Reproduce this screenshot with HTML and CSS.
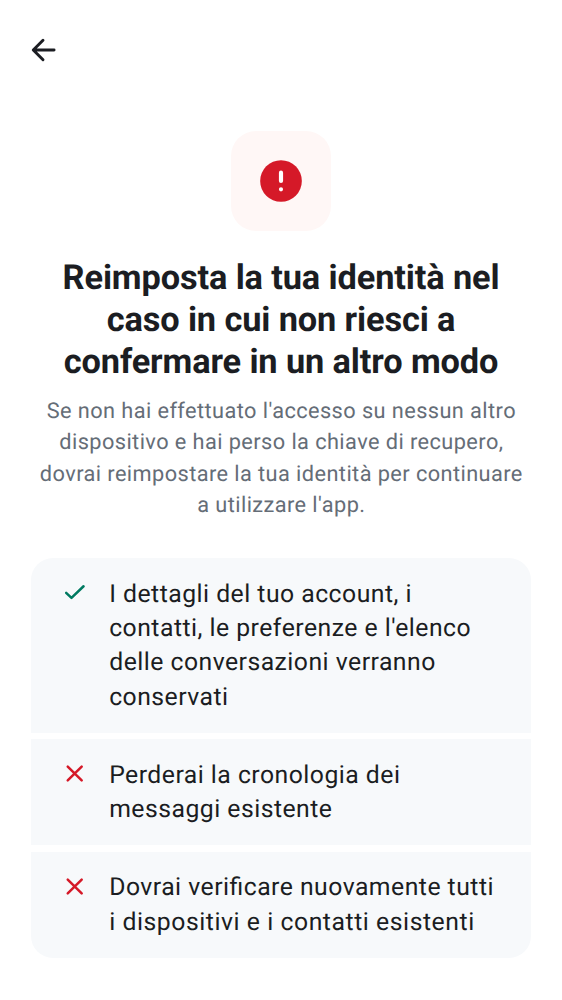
FILE: index.html
```html
<!DOCTYPE html>
<html lang="it">
<head>
<meta charset="utf-8">
<title>Reimposta identità</title>
<link rel="stylesheet" href="styles.css">
</head>
<body>
<header class="topbar">
<svg class="back" width="32" height="32" viewBox="0 0 24 24"><path d="M12 4.7 4.7 12l7.3 7.3M5 12h15.3" /></svg>
</header>
<main class="content">
<div class="badge"><svg width="50" height="50" viewBox="0 0 24 24"><circle cx="12" cy="12" r="10"/><path d="M12 8v4M12 16v.01"/></svg></div>
<h1 class="title">Reimposta la tua identità nel<br>caso in cui non riesci a<br>confermare in un altro modo</h1>
<p class="subtitle">Se non hai effettuato l'accesso su nessun altro<br>dispositivo e hai perso la chiave di recupero,<br>dovrai reimpostare la tua identità per continuare<br>a utilizzare l'app.</p>
<ul class="list">
<li class="item"><svg class="icon ok" viewBox="0 0 24 24"><path d="m4 12.3 5.1 4.9L20.7 6"/></svg><span>I dettagli del tuo account, i<br>contatti, le preferenze e l'elenco<br>delle conversazioni verranno<br>conservati</span></li>
<li class="item"><svg class="icon no" viewBox="0 0 24 24"><path d="m5.5 5.3 13.4 13.4m0-13.4-13.4 13.4"/></svg><span>Perderai la cronologia dei<br>messaggi esistente</span></li>
<li class="item"><svg class="icon no" viewBox="0 0 24 24"><path d="m5.5 5.3 13.4 13.4m0-13.4-13.4 13.4"/></svg><span>Dovrai verificare nuovamente tutti<br><span class="wide">i dispositivi e i contatti esistenti</span></span></li>
</ul>
</main>
</body>
</html>
```
FILE: styles.css
```css
* { box-sizing: border-box; }
body { margin: 0; background: #fff; color: #1b1d22; font-family: Roboto, sans-serif; text-rendering: geometricPrecision; font-feature-settings: "liga" 1; }
.topbar { height: 100px; padding: 34px 0 0 27px; }
.back { display: block; fill: none; stroke: #1b1d22; stroke-width: 2.2; stroke-linecap: round; stroke-linejoin: round; }
.content { padding: 31px 31px 0; display: flex; flex-direction: column; align-items: center; }
.badge { width: 100px; height: 100px; border-radius: 25px; background: #fff7f6; display: flex; align-items: center; justify-content: center; }
.badge circle { fill: #d51928; }
.badge path { fill: none; stroke: #fff; stroke-width: 2; stroke-linecap: round; }
.title { margin: 26px 0 0; font-size: 34.375px; line-height: 42px; font-weight: 700; letter-spacing: -.13px; text-align: center; white-space: nowrap; }
.subtitle { margin: 13px 0 0; padding-left: .7px; font-size: 21.75px; line-height: 31.25px; letter-spacing: .42px; color: #656d77; text-align: center; white-space: nowrap; }
.list { list-style: none; width: 500px; margin: 37px 0 0; padding: 0; display: flex; flex-direction: column; gap: 6.5px; border-radius: 22px; overflow: hidden; }
.item { display: flex; gap: 22.2px; padding: 19.5px 0 17.75px 31px; background: #f7f9fb; font-size: 24.75px; line-height: 34.4px; letter-spacing: .48px; white-space: nowrap; }
.icon { width: 25px; height: 25px; margin-top: 2.1px; flex: none; fill: none; stroke-width: 2.4; stroke-linecap: round; stroke-linejoin: round; }
.wide { letter-spacing: .55px; }
.ok { stroke: #007a61; }
.no { stroke: #d51928; }
```
